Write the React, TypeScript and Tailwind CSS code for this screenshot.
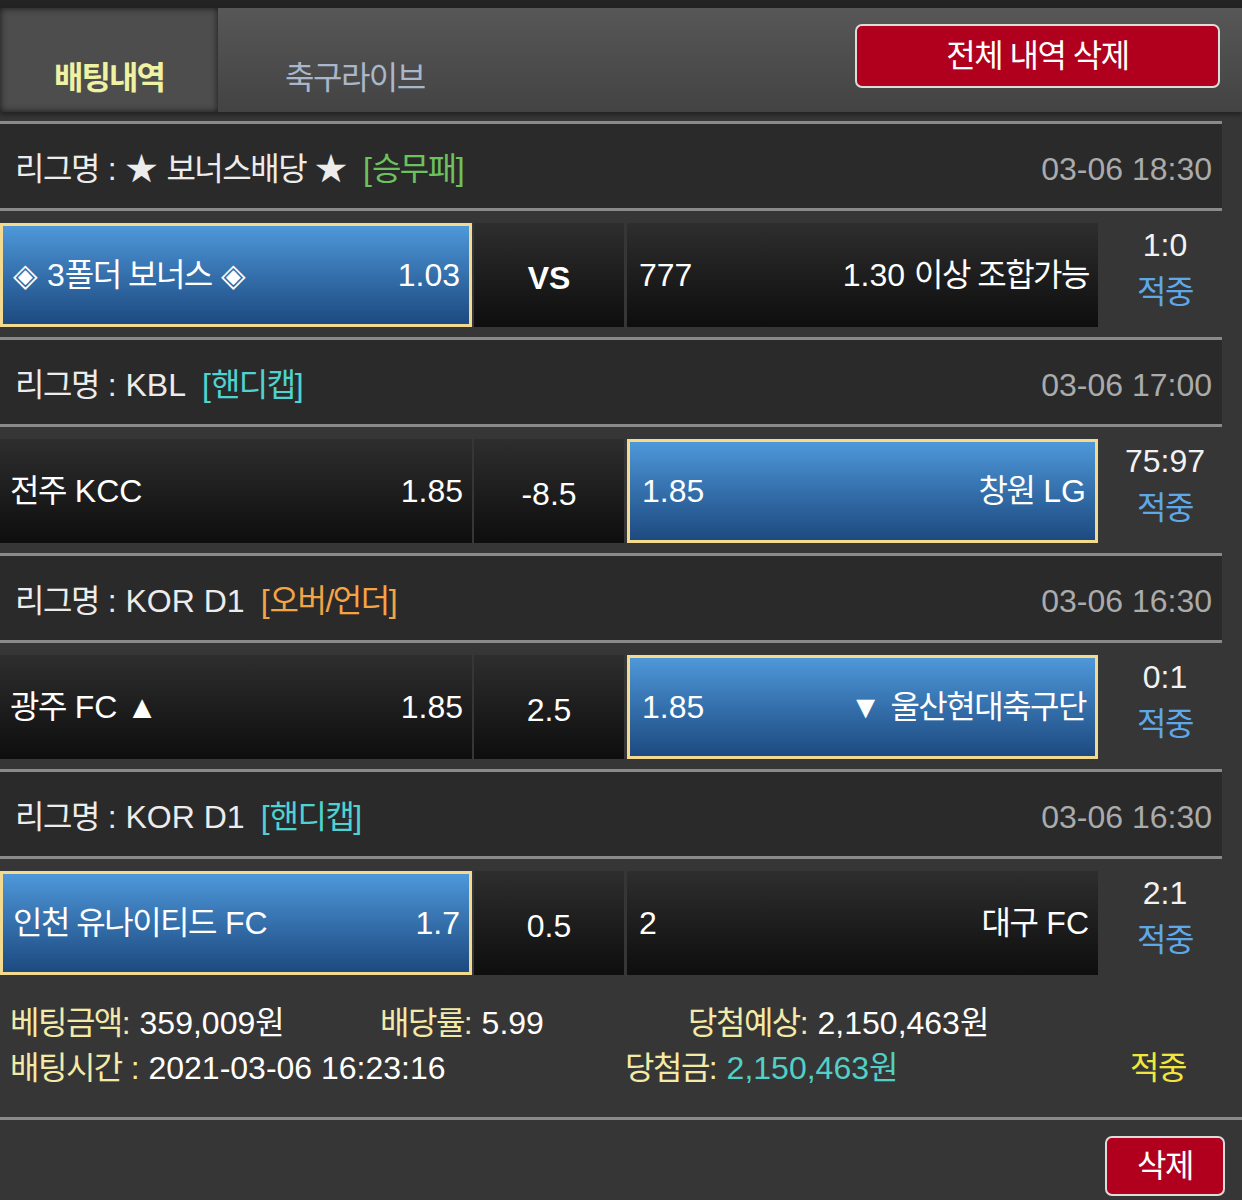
import React from 'react';

type Side = {
  name: React.ReactNode;
  odds: string;
};

interface MatchItem {
  league: React.ReactNode;
  tag: string;
  tagColor: string;
  time: string;
  home: Side;
  away: Side;
  center: string;
  centerBold?: boolean;
  pick: 'home' | 'away';
  score: string;
}

// hangul in the screenshot is narrower than Noto CJK, pull it in a bit
const Ko = ({ children }: { children: React.ReactNode }) => (
  <span className="tracking-[-1.5px]">{children}</span>
);

const matches: MatchItem[] = [
  {
    league: (
      <>
        <Ko>리그명</Ko> : ★ <Ko>보너스배당</Ko> ★
      </>
    ),
    tag: '승무패',
    tagColor: 'text-[#6cc25c]',
    time: '03-06 18:30',
    home: { name: <>◈ 3<Ko>폴더 보너스</Ko> ◈</>, odds: '1.03' },
    away: { name: <>1.30 <Ko>이상 조합가능</Ko></>, odds: '777' },
    center: 'VS',
    centerBold: true,
    pick: 'home',
    score: '1:0',
  },
  {
    league: (
      <>
        <Ko>리그명</Ko> : KBL
      </>
    ),
    tag: '핸디캡',
    tagColor: 'text-[#4fd2d0]',
    time: '03-06 17:00',
    home: { name: <><Ko>전주</Ko> KCC</>, odds: '1.85' },
    away: { name: <><Ko>창원</Ko> LG</>, odds: '1.85' },
    center: '-8.5',
    pick: 'away',
    score: '75:97',
  },
  {
    league: (
      <>
        <Ko>리그명</Ko> : KOR D1
      </>
    ),
    tag: '오버/언더',
    tagColor: 'text-[#f5a445]',
    time: '03-06 16:30',
    home: { name: <><Ko>광주</Ko> FC ▲</>, odds: '1.85' },
    away: { name: <>▼ <Ko>울산현대축구단</Ko></>, odds: '1.85' },
    center: '2.5',
    pick: 'away',
    score: '0:1',
  },
  {
    league: (
      <>
        <Ko>리그명</Ko> : KOR D1
      </>
    ),
    tag: '핸디캡',
    tagColor: 'text-[#4fd2d0]',
    time: '03-06 16:30',
    home: { name: <><Ko>인천 유나이티드</Ko> FC</>, odds: '1.7' },
    away: { name: <><Ko>대구</Ko> FC</>, odds: '2' },
    center: '0.5',
    pick: 'home',
    score: '2:1',
  },
];

const cellBase = 'h-[104px] flex items-center justify-between';
const darkCell = 'bg-gradient-to-b from-[#2e2e2e] to-[#0e0e0e]';
const blueCell =
  'bg-gradient-to-b from-[#4e98da] to-[#1d4a80] border-[3px] border-[#f3da8e]';

const Line = ({ full }: { full?: boolean }) => (
  <div className={`h-[3px] bg-[#8a8a8a] ${full ? 'w-full' : 'w-[1222px]'}`} />
);

const MatchBlock = ({ m }: { m: MatchItem }) => {
  const homeSel = m.pick === 'home';
  const awaySel = m.pick === 'away';
  return (
    <>
      <Line />
      <div className="w-[1222px] h-[84px] bg-[#2a2a2a] flex items-center justify-between pl-[15px] pr-[10px] pt-[6px]">
        <div className="flex items-center text-[#ececec]">
          <span>{m.league}</span>
          <span className={`ml-[16px] ${m.tagColor}`}>
            [<Ko>{m.tag}</Ko>]
          </span>
        </div>
        <span className="text-[#ababab]">{m.time}</span>
      </div>
      <Line />
      <div className="w-full h-[126px] flex items-start pt-[12px]">
        <div
          className={`${cellBase} w-[472px] pl-[10px] pr-[9px] ${homeSel ? blueCell : darkCell}`}
        >
          <span>{m.home.name}</span>
          <span>{m.home.odds}</span>
        </div>
        <div
          className={`${cellBase} ${darkCell} w-[150px] ml-[2px] !justify-center pt-[6px] ${
            m.centerBold ? 'font-bold' : ''
          }`}
        >
          {m.center}
        </div>
        <div
          className={`${cellBase} w-[471px] ml-[3px] pl-[12px] pr-[9px] ${awaySel ? blueCell : darkCell}`}
        >
          <span>{m.away.odds}</span>
          <span>{m.away.name}</span>
        </div>
        <div className="w-[134px] h-[104px] flex flex-col items-center justify-center leading-[47px] pb-[12px]">
          <span className="text-[#f2f2f2]">{m.score}</span>
          <span className="text-[#5fa8e8]">
            <Ko>적중</Ko>
          </span>
        </div>
      </div>
    </>
  );
};

export default function App() {
  return (
    <div
      className="w-[1242px] h-[1200px] bg-[#363636] text-white text-[32px] leading-[40px] overflow-hidden"
      style={{ fontFamily: '"Liberation Sans", "Noto Sans CJK KR", sans-serif' }}
    >
      <div className="h-[8px] bg-[#232323]" />
      {/* tabs */}
      <div className="h-[104px] bg-gradient-to-b from-[#575757] to-[#434343] flex items-stretch shadow-[0_3px_4px_rgba(0,0,0,0.35)]">
        <div className="w-[218px] bg-[#4d4d4d] shadow-[inset_0_0_7px_rgba(0,0,0,0.7)] flex items-end justify-center pb-[14px]">
          <span className="font-bold text-[#eef2a2] tracking-[-2px]">배팅내역</span>
        </div>
        <div className="flex items-end pb-[14px] ml-[67px] text-[#aab6c9]">
          <Ko>축구라이브</Ko>
        </div>
        <div className="flex-1 flex justify-end items-start pt-[16px] pr-[22px]">
          <button className="w-[365px] h-[64px] rounded-[7px] border-2 border-[#dcdcdc] bg-[#b1001d] text-white flex items-center justify-center">
            <Ko>전체 내역 삭제</Ko>
          </button>
        </div>
      </div>
      <div className="h-[9px]" />

      {matches.map((m, i) => (
        <MatchBlock key={i} m={m} />
      ))}

      {/* summary */}
      <div className="h-[132px] pt-[16px] leading-[45px]">
        <div className="flex">
          <div className="w-[380px] pl-[10px]">
            <span className="text-[#f3eaa8]">
              <Ko>베팅금액</Ko>:
            </span>{' '}
            359,009<Ko>원</Ko>
          </div>
          <div className="w-[308px]">
            <span className="text-[#f3eaa8]">
              <Ko>배당률</Ko>:
            </span>{' '}
            5.99
          </div>
          <div>
            <span className="text-[#f3eaa8]">
              <Ko>당첨예상</Ko>:
            </span>{' '}
            2,150,463<Ko>원</Ko>
          </div>
        </div>
        <div className="flex">
          <div className="w-[625px] pl-[10px]">
            <span className="text-[#f3eaa8]">
              <Ko>배팅시간</Ko> :
            </span>{' '}
            2021-03-06 16:23:16
          </div>
          <div className="w-[505px]">
            <span className="text-[#f3eaa8]">
              <Ko>당첨금</Ko>:
            </span>{' '}
            <span className="text-[#52cfc6]">
              2,150,463<Ko>원</Ko>
            </span>
          </div>
          <div className="text-[#f2e63e]">
            <Ko>적중</Ko>
          </div>
        </div>
      </div>
      <Line full />
      <div className="flex justify-end pt-[16px] pr-[17px]">
        <button className="w-[120px] h-[60px] rounded-[7px] border-2 border-[#dcdcdc] bg-[#b1001d] text-white flex items-center justify-center">
          <Ko>삭제</Ko>
        </button>
      </div>
    </div>
  );
}
